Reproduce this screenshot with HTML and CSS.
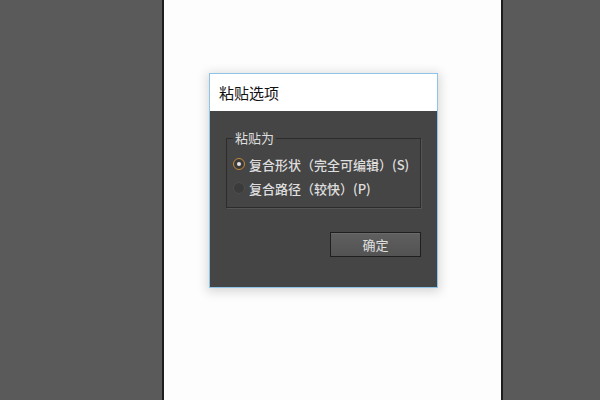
FILE: index.html
```html
<!DOCTYPE HTML>
<html>
<head>
  <title>粘贴选项</title>
  <meta name="viewport" content="width=device-width, initial-scale=1">
  <link rel="stylesheet" href="styles.css">
</head>
<body>
  <div class="desk">
    <div class="side side-left"></div>
    <div class="page">
      <div class="dialog">
        <div class="title">粘贴选项</div>
        <div class="dialog-body">
          <fieldset class="group">
            <legend>粘贴为</legend>
            <label class="option"><span class="radio checked"></span>复合形状（完全可编辑）(S)</label>
            <label class="option"><span class="radio"></span>复合路径（较快）(P)</label>
          </fieldset>
          <div class="actions">
            <button class="btn">确定</button>
          </div>
        </div>
      </div>
    </div>
    <div class="side side-right"></div>
  </div>
</body>
</html>
```

FILE: styles.css
```css
html {
  font-family: "Noto Sans CJK SC", "Liberation Sans", sans-serif;
}
body {
  margin: 0;
}
.desk {
  display: flex;
  height: 400px;
  background-color: #5a5a5a;
}
.side-left {
  width: 162px;
  border-right: 2px solid #1e1e1e;
}
.side-right {
  flex: 1;
  border-left: 2px solid #1e1e1e;
}
.page {
  width: 337px;
  background-color: #fdfdfd;
  padding: 73px 0 0 45px;
  box-sizing: border-box;
}
.dialog {
  width: 229px;
  height: 215px;
  box-sizing: border-box;
  border: 1px solid #8fc3e8;
  background-color: #454545;
  box-shadow: 0 2px 10px 2px rgba(0,0,0,.15);
  display: flex;
  flex-direction: column;
}
.title {
  height: 37px;
  background-color: #fff;
  color: #111;
  font-size: 15px;
  line-height: 37px;
  padding-left: 9px;
}
.dialog-body {
  flex: 1;
  padding: 20px 16px 0 16px;
}
.group {
  margin: 0;
  padding: 7px 0 6px 6px;
  height: 77px;
  box-sizing: border-box;
  border: 1px solid #2c2c2c;
  box-shadow: 1px 1px 0 #555;
  color: #dedede;
}
.group legend {
  font-size: 13px;
  padding: 0 2px;
  margin-left: 0;
  line-height: 14px;
}
.option {
  display: flex;
  align-items: center;
  font-size: 13px;
  height: 24px;
  font-weight: 500;
}
.radio {
  width: 10px;
  height: 10px;
  border-radius: 50%;
  background-color: #3b3b3b;
  border: 1px solid #4e4e4e;
  margin-right: 4px;
  position: relative;
}
.radio.checked {
  border-color: #c58a3a;
  background-color: #3a3a3a;
}
.radio.checked::after {
  content: "";
  position: absolute;
  left: 3px;
  top: 3px;
  width: 4px;
  height: 4px;
  border-radius: 50%;
  background-color: #e6e6e6;
}
.actions {
  display: flex;
  justify-content: flex-end;
  padding-top: 24px;
}
.btn {
  width: 91px;
  height: 25px;
  font-family: inherit;
  font-size: 13px;
  color: #e0e0e0;
  background: linear-gradient(#5f5f5f, #535353);
  border: 1px solid #1f1f1f;
  box-shadow: inset 0 1px 0 #6a6a6a;
  padding: 0;
}
```
